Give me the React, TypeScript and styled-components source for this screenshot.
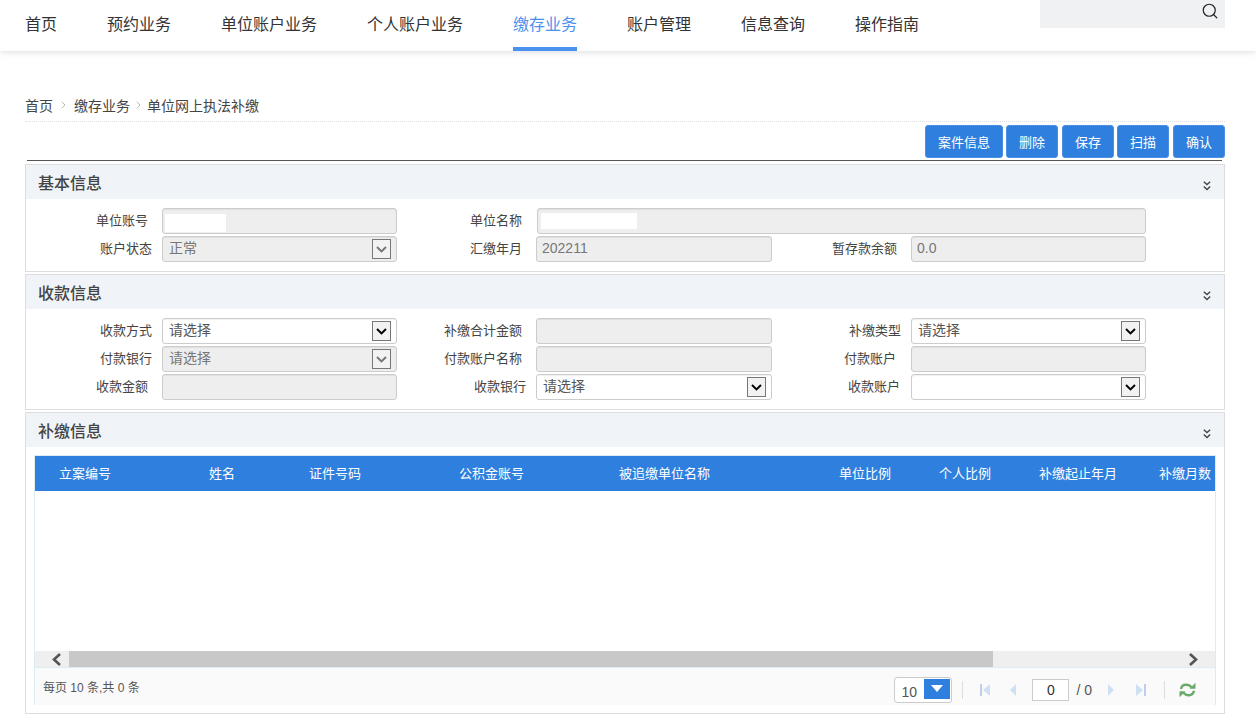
import React from "react";
import styled, { createGlobalStyle } from "styled-components";
import { Search } from "lucide-react";

const Global = createGlobalStyle`
  html, body { margin: 0; padding: 0; background: #fff; }
  body { font-family: "Liberation Sans", "Noto Sans CJK SC", sans-serif; color: #333; }
  * { box-sizing: border-box; }
`;

const Nav = styled.header`
  height: 51px;
  background: #fff;
  box-shadow: 0 1px 6px rgba(120, 130, 145, 0.28);
  padding: 0 31px 0 25px;
  display: flex;
  justify-content: space-between;
  align-items: flex-start;
`;
const NavList = styled.nav`
  display: flex;
  gap: 50px;
`;
const NavItem = styled.a<{ $active?: boolean }>`
  padding-top: 3px;
  line-height: 44px;
  font-size: 16px;
  color: ${(p) => (p.$active ? "#4a90ee" : "#333")};
  border-bottom: 4px solid ${(p) => (p.$active ? "#4a90ee" : "transparent")};
`;
const SearchBox = styled.div`
  width: 185px;
  height: 28px;
  background: #f0f1f3;
  display: flex;
  justify-content: flex-end;
  padding: 2px 6px 0 0;
  color: #222;
`;

const Main = styled.main`
  width: 1200px;
  margin-left: 25px;
`;
const Crumbs = styled.div`
  margin-top: 45px;
  height: 26px;
  border-bottom: 1px dotted #ddd;
  display: flex;
  align-items: center;
  font-size: 14px;
  color: #444;
  padding-bottom: 8px;
`;
const CrumbSep = styled.svg<{ $gap: number }>`
  margin: 0 ${(p) => p.$gap}px;
  flex: none;
`;
const Toolbar = styled.div`
  display: flex;
  justify-content: flex-end;
  gap: 3px;
  margin-top: 3px;
`;
const ActionButton = styled.button<{ $wide?: boolean }>`
  width: ${(p) => (p.$wide ? 78 : 52)}px;
  height: 33px;
  border: 1px solid #4a8fe3;
  border-radius: 3px;
  background: #2f7fde;
  color: #fff;
  font: 13px "Liberation Sans", "Noto Sans CJK SC", sans-serif;
  padding: 0;
  &:nth-child(odd):not(:first-child) {
    margin-left: 1px;
  }
`;
const Rule = styled.div`
  height: 1px;
  margin: 2px 3px 3px 2px;
  background: #555;
`;

const Panel = styled.section`
  border: 1px solid #ddd;
  margin-bottom: 2px;
`;
const PanelHead = styled.div`
  height: 34px;
  background: #f0f4f8;
  display: flex;
  align-items: center;
  justify-content: space-between;
  padding: 0 13px 0 12px;
  font-size: 16px;
  font-weight: 500;
  color: #444;
`;
const Chevrons = styled.svg`
  margin-top: 8px;
`;
const FormGrid = styled.div`
  display: grid;
  grid-template-columns: 136px 235px 139px 236px 139px 235px;
  grid-auto-rows: 26px;
  row-gap: 2px;
  padding: 9px 0;
`;
const Label = styled.label<{ $right?: number }>`
  font-size: 13px;
  color: #444;
  display: flex;
  align-items: center;
  justify-content: flex-end;
  padding-right: ${(p) => p.$right ?? 10}px;
  padding-bottom: 4px;
`;
const Field = styled.div<{ $enabled?: boolean; $span?: number; $shift?: number; $digits?: boolean }>`
  position: relative;
  grid-column: span ${(p) => p.$span ?? 1};
  margin-left: ${(p) => p.$shift ?? 0}px;
  border: 1px solid #ccc;
  border-radius: 3px;
  background: ${(p) => (p.$enabled ? "#fff" : "#eee")};
  color: ${(p) => (p.$enabled ? "#555" : "#777")};
  font-size: 14px;
  display: flex;
  align-items: center;
  padding: 0 0 ${(p) => (p.$digits ? 3 : 5)}px ${(p) => (p.$digits ? 5 : 6)}px;
  box-shadow: inset 0 1px 1px rgba(0, 0, 0, 0.06);
`;
const Mask = styled.span<{ $w: number; $h: number; $left: number; $top: number }>`
  position: absolute;
  left: ${(p) => p.$left}px;
  top: ${(p) => p.$top}px;
  width: ${(p) => p.$w}px;
  height: ${(p) => p.$h}px;
  background: #fff;
`;
const SelectArrow = styled.span<{ $enabled?: boolean }>`
  position: absolute;
  right: 5px;
  top: 2px;
  width: 19px;
  height: 20px;
  border: 1px solid #777;
  background: #f2f2f2;
  display: flex;
  align-items: center;
  justify-content: center;
  color: ${(p) => (p.$enabled ? "#000" : "#777")};
`;

const TablePanel = styled(Panel)`
  height: 302px;
  margin: 0;
`;
const TableBox = styled.div`
  margin: 8px 8px 0 8px;
  border: solid #dcecf3;
  border-width: 1px 1px 0;
`;
const HeadRow = styled.div`
  height: 35px;
  background: #2f7fde;
  color: #fff;
  font-size: 13px;
  display: flex;
  align-items: center;
  overflow: hidden;
  padding-bottom: 2px;
`;
const HeadCell = styled.div<{ $w: number }>`
  flex: none;
  width: ${(p) => p.$w}px;
  padding-left: 24px;
  white-space: nowrap;
`;
const TableBody = styled.div`
  height: 160px;
  background: #fff;
`;
const Scrollbar = styled.div`
  height: 17px;
  background: #efefef;
  display: flex;
  align-items: center;
  justify-content: space-between;
  position: relative;
  border-bottom: 1px solid #dcecf3;
`;
const ScrollArrow = styled.span<{ $end?: boolean }>`
  width: 34px;
  display: flex;
  justify-content: center;
  color: #555;
  padding: 1px ${(p) => (p.$end ? 10 : 0)}px 0 ${(p) => (p.$end ? 0 : 10)}px;
`;
const ScrollThumb = styled.div`
  position: absolute;
  left: 34px;
  top: 0;
  width: 924px;
  height: 16px;
  background: #c8c8c8;
`;
const Footer = styled.div`
  height: 37px;
  background: #fafafa;
  display: flex;
  align-items: center;
  justify-content: space-between;
  padding: 0 19px 0 8px;
  font-size: 12px;
  color: #555;
`;
const Pager = styled.div`
  display: flex;
  align-items: center;
  font-size: 14px;
  padding-top: 6px;
`;
const PageSize = styled.div`
  position: relative;
  width: 58px;
  height: 26px;
  border: 1px solid #ccc;
  border-radius: 3px;
  background: #fff;
  font-size: 14px;
  line-height: 29px;
  padding-left: 6px;
`;
const PageSizeButton = styled.span`
  position: absolute;
  right: 1px;
  top: 1px;
  width: 26px;
  height: 20px;
  background: #2f7fde;
  display: flex;
  align-items: center;
  justify-content: center;
`;
const PagerSep = styled.span<{ $l: number; $r: number }>`
  width: 1px;
  height: 18px;
  background: #ddd;
  margin: 0 ${(p) => p.$r}px 0 ${(p) => p.$l}px;
`;
const PageIcon = styled.svg<{ $l?: number; $r?: number }>`
  flex: none;
  margin: 0 ${(p) => p.$r ?? 0}px 0 ${(p) => p.$l ?? 0}px;
`;
const PageInput = styled.div`
  width: 37px;
  height: 22px;
  border: 1px solid #ccc;
  background: #fff;
  text-align: center;
  line-height: 20px;
  color: #333;
  margin: 0 7px 0 16px;
`;
const PageTotal = styled.span`
  color: #555;
  margin-right: 16px;
  white-space: nowrap;
`;

const DoubleChevron = () => (
  <Chevrons width="8" height="10" viewBox="0 0 8 10" fill="none" stroke="#444" strokeWidth="1.4">
    <path d="M0.8 0.8 4 3.6 7.2 0.8" />
    <path d="M0.8 5.6 4 8.6 7.2 5.6" />
  </Chevrons>
);

const Sep = ({ gap }: { gap: number }) => (
  <CrumbSep $gap={gap} width="5" height="8" viewBox="0 0 5 8" fill="none" stroke="#bbb" strokeWidth="1">
    <path d="M0.7 0.7 4 4 0.7 7.3" />
  </CrumbSep>
);

const Arrow = ({ enabled }: { enabled?: boolean }) => (
  <SelectArrow $enabled={enabled}>
    <svg width="11" height="7" viewBox="0 0 11 7" fill="none" stroke="currentColor" strokeWidth="2">
      <path d="M1 1 5.5 5.4 10 1" />
    </svg>
  </SelectArrow>
);

const navItems = ["首页", "预约业务", "单位账户业务", "个人账户业务", "缴存业务", "账户管理", "信息查询", "操作指南"];
const columns: [string, number][] = [
  ["立案编号", 150],
  ["姓名", 100],
  ["证件号码", 150],
  ["公积金账号", 160],
  ["被追缴单位名称", 220],
  ["单位比例", 100],
  ["个人比例", 100],
  ["补缴起止年月", 120],
  ["补缴月数", 90],
];

export default function App() {
  return (
    <>
      <Global />
      <Nav>
        <NavList>
          {navItems.map((n) => (
            <NavItem key={n} $active={n === "缴存业务"}>
              {n}
            </NavItem>
          ))}
        </NavList>
        <SearchBox>
          <Search size={18} strokeWidth={1.6} />
        </SearchBox>
      </Nav>
      <Main>
        <Crumbs>
          首页
          <Sep gap={8} />
          缴存业务
          <Sep gap={6} />
          单位网上执法补缴
        </Crumbs>
        <Toolbar>
          <ActionButton $wide>案件信息</ActionButton>
          <ActionButton>删除</ActionButton>
          <ActionButton>保存</ActionButton>
          <ActionButton>扫描</ActionButton>
          <ActionButton>确认</ActionButton>
        </Toolbar>
        <Rule />
        <Panel>
          <PanelHead>
            基本信息
            <DoubleChevron />
          </PanelHead>
          <FormGrid>
            <Label $right={14}>单位账号</Label>
            <Field>
              <Mask $left={2} $top={5} $w={61} $h={18} />
            </Field>
            <Label $right={14}>单位名称</Label>
            <Field $span={3} $shift={1}>
              <Mask $left={3} $top={4} $w={96} $h={16} />
            </Field>
            <Label>账户状态</Label>
            <Field>
              正常
              <Arrow />
            </Field>
            <Label $right={14}>汇缴年月</Label>
            <Field $digits>202211</Field>
            <Label $right={14}>暂存款余额</Label>
            <Field $digits>0.0</Field>
          </FormGrid>
        </Panel>
        <Panel>
          <PanelHead>
            收款信息
            <DoubleChevron />
          </PanelHead>
          <FormGrid>
            <Label>收款方式</Label>
            <Field $enabled>
              请选择
              <Arrow enabled />
            </Field>
            <Label $right={14}>补缴合计金额</Label>
            <Field />
            <Label>补缴类型</Label>
            <Field $enabled>
              请选择
              <Arrow enabled />
            </Field>
            <Label>付款银行</Label>
            <Field>
              请选择
              <Arrow />
            </Field>
            <Label $right={14}>付款账户名称</Label>
            <Field />
            <Label $right={15}>付款账户</Label>
            <Field />
            <Label $right={14}>收款金额</Label>
            <Field />
            <Label>收款银行</Label>
            <Field $enabled>
              请选择
              <Arrow enabled />
            </Field>
            <Label $right={11}>收款账户</Label>
            <Field $enabled>
              <Arrow enabled />
            </Field>
          </FormGrid>
        </Panel>
        <TablePanel>
          <PanelHead>
            补缴信息
            <DoubleChevron />
          </PanelHead>
          <TableBox>
            <HeadRow>
              {columns.map(([t, w]) => (
                <HeadCell key={t} $w={w}>
                  {t}
                </HeadCell>
              ))}
            </HeadRow>
            <TableBody />
            <Scrollbar>
              <ScrollThumb />
              <ScrollArrow>
                <svg width="12" height="13" viewBox="0 0 12 13" fill="none" stroke="currentColor" strokeWidth="2.6">
                  <path d="M9 1 3 6.5 9 12" />
                </svg>
              </ScrollArrow>
              <ScrollArrow $end>
                <svg width="12" height="13" viewBox="0 0 12 13" fill="none" stroke="currentColor" strokeWidth="2.6">
                  <path d="M3 1 9 6.5 3 12" />
                </svg>
              </ScrollArrow>
            </Scrollbar>
            <Footer>
              <span>每页 10 条,共 0 条</span>
              <Pager>
                <PageSize>
                  10
                  <PageSizeButton>
                    <svg width="12" height="7" viewBox="0 0 12 7">
                      <path d="M0 0h12L6 7z" fill="#fff" />
                    </svg>
                  </PageSizeButton>
                </PageSize>
                <PagerSep $l={10} $r={17} />
                <PageIcon width="10" height="12" viewBox="0 0 10 12">
                  <path d="M0 0h2v12H0z" fill="#bcd0ec" />
                  <path d="M10 0v12L3 6z" fill="#cfdff4" />
                </PageIcon>
                <PageIcon $l={20} width="6" height="12" viewBox="0 0 6 12">
                  <path d="M6 0v12L0 6z" fill="#cfdff4" />
                </PageIcon>
                <PageInput>0</PageInput>
                <PageTotal>/ 0</PageTotal>
                <PageIcon width="6" height="12" viewBox="0 0 6 12">
                  <path d="M0 0v12L6 6z" fill="#cfdff4" />
                </PageIcon>
                <PageIcon $l={22} width="10" height="12" viewBox="0 0 10 12">
                  <path d="M8 0h2v12H8z" fill="#bcd0ec" />
                  <path d="M0 0v12L7 6z" fill="#cfdff4" />
                </PageIcon>
                <PagerSep $l={18} $r={14} />
                <PageIcon width="17" height="16" viewBox="0 0 17 16" fill="none" stroke="#6aa96a" strokeWidth="2.4">
                  <path d="M2 7C2.6 4 5 2.6 7.6 2.8c2 .1 3.6.8 4.9 2.4" />
                  <path d="M15 8.8c-.6 3-3 4.6-5.6 4.4-2-.1-3.6-.8-4.9-2.4" />
                  <path d="M10.5 6.8h6V.8z" fill="#6aa96a" stroke="none" />
                  <path d="M6.5 9.2h-6v6z" fill="#6aa96a" stroke="none" />
                </PageIcon>
              </Pager>
            </Footer>
          </TableBox>
        </TablePanel>
      </Main>
    </>
  );
}
